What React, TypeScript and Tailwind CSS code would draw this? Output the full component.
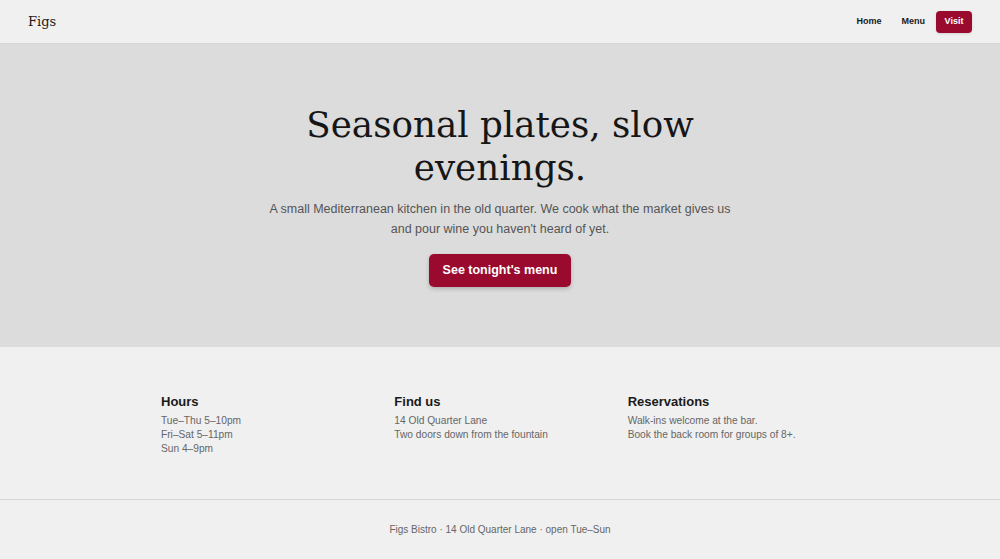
const sans = "font-['Helvetica_Neue','Liberation_Sans',Arial,sans-serif]"
const serif = "font-['Georgia','DejaVu_Serif','Liberation_Serif',serif]"

function InfoBlock({ title, lines }: { title: string; lines: string[] }) {
  return (
    <div>
      <h3 className="text-[13px] font-semibold text-[#1a1a1a] mb-[3px] leading-[18px]">{title}</h3>
      {lines.map((l) => (
        <p key={l} className="text-[10.2px] leading-[14px] text-[#666]">
          {l}
        </p>
      ))}
    </div>
  )
}

export default function App() {
  return (
    <div className={`min-h-[559px] bg-[#f0f0f0] ${sans}`}>
      {/* Header */}
      <header className="h-[44px] flex items-center justify-between px-[28px] border-b border-[#d6d6d6] bg-[#f0f0f0]">
        <span className={`${serif} text-[13px] text-[#1a1a1a]`}>Figs</span>
        <nav className="flex items-center text-[9px] font-semibold text-[#1a1a1a]">
          <a>Home</a>
          <a className="ml-[20px]">Menu</a>
          <a className="ml-[11px] bg-[#9a0a2e] text-white rounded-[4px] w-[36px] h-[22px] flex items-center justify-center shadow-sm">
            Visit
          </a>
        </nav>
      </header>

      {/* Hero */}
      <section className="h-[303px] bg-[#dcdcdc] flex flex-col items-center pt-[59px]">
        <h1 className={`${serif} text-[35.7px] leading-[43px] text-[#161616] text-center max-w-[420px]`}>
          Seasonal plates, slow evenings.
        </h1>
        <p className="mt-[10px] text-[12.5px] leading-[20px] text-[#555] text-center max-w-[480px]">
          A small Mediterranean kitchen in the old quarter. We cook what the market gives us and pour
          wine you haven't heard of yet.
        </p>
        <button className="mt-[15px] h-[33px] w-[142px] rounded-[5px] bg-[#9a0a2e] text-white text-[12.5px] font-semibold shadow-[0_2px_4px_rgba(0,0,0,0.2)]">
          See tonight's menu
        </button>
      </section>

      {/* Info */}
      <section className="h-[153px] border-b border-[#d6d6d6] pt-[46px]">
        <div className="w-[700px] ml-[161px] grid grid-cols-3">
          <InfoBlock title="Hours" lines={["Tue–Thu 5–10pm", "Fri–Sat 5–11pm", "Sun 4–9pm"]} />
          <InfoBlock title="Find us" lines={["14 Old Quarter Lane", "Two doors down from the fountain"]} />
          <InfoBlock
            title="Reservations"
            lines={["Walk-ins welcome at the bar.", "Book the back room for groups of 8+."]}
          />
        </div>
      </section>

      {/* Footer */}
      <footer className="h-[59px] flex items-center justify-center text-[10px] text-[#666]">
        Figs Bistro · 14 Old Quarter Lane · open Tue–Sun
      </footer>
    </div>
  )
}
